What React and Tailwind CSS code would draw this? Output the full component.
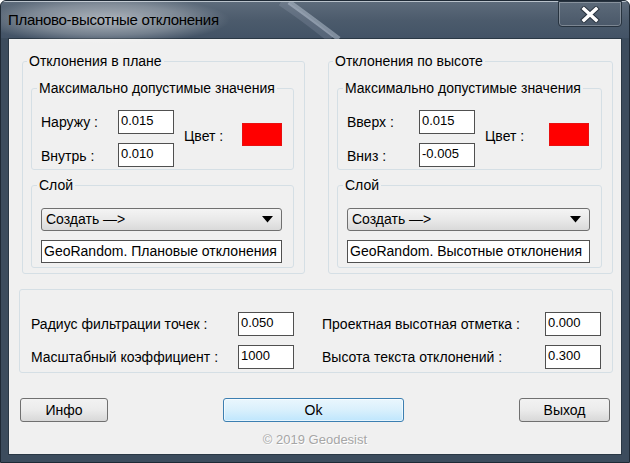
import React from "react";

function Field({ value, cls }) {
  return (
    <div className={"h-[24px] bg-white border border-[#505050] text-[13px] leading-[18px] pl-[2px] pt-[1px] text-black " + cls}>
      {value}
    </div>
  );
}

function Combo() {
  return (
    <div className="h-[23px] rounded-[3px] border border-[#707070] bg-gradient-to-b from-[#f4f4f4] via-[#e9e9e9] to-[#d9d9d9] flex items-center justify-between pl-[4px] pr-[8px] text-[14px]">
      <span>Создать —&gt;</span>
      <svg width="11" height="7" viewBox="0 0 11 7"><path d="M0 0 L11 0 L5.5 6.5 Z" fill="#000" /></svg>
    </div>
  );
}

function TextBox({ value }) {
  return (
    <div className="h-[23px] bg-white border border-[#505050] text-[14px] leading-[19px] pl-[2px] pt-[1px] whitespace-nowrap overflow-hidden">
      {value}
    </div>
  );
}

function Group({ title, labelA, labelB, valA, valB, labW, colorW, layerText, wcls }) {
  return (
    <fieldset className={"border border-[#d5dfe5] rounded-[3px] p-0 m-0 " + wcls}>
      <legend className="ml-[4px] px-[2px] text-[14px] leading-[16px]">{title}</legend>
      <div className="pt-[11px] pl-[8px] pr-[10px] pb-[5px]">
        <fieldset className="border border-[#d5dfe5] rounded-[3px] p-0 m-0">
          <legend className="ml-[5px] px-[2px] text-[14px] leading-[16px]">Максимально допустимые значения</legend>
          <div className="pt-[14px] pl-[9px] pb-[2px] flex">
            <div className="flex flex-col gap-[8px]">
              <div className="flex items-center">
                <span className={"text-[14px] " + labW}>{labelA}</span>
                <Field value={valA} cls="w-[56px]" />
              </div>
              <div className="flex items-center">
                <span className={"text-[14px] pt-[4px] " + labW}>{labelB}</span>
                <Field value={valB} cls="w-[56px]" />
              </div>
            </div>
            <span className={"ml-[10px] mt-[18px] text-[14px] leading-[16px] " + colorW}>Цвет :</span>
            <div className="mt-[13px] w-[40px] h-[23px] bg-[#ff0000] border border-[#e81010]" />
          </div>
        </fieldset>
        <fieldset className="mt-[7px] border border-[#d5dfe5] rounded-[3px] p-0 m-0">
          <legend className="ml-[5px] px-[2px] text-[14px] leading-[16px]">Слой</legend>
          <div className="pt-[15px] pl-[9px] pr-[11px] pb-[4px] flex flex-col gap-[9px]">
            <Combo />
            <TextBox value={layerText} />
          </div>
        </fieldset>
      </div>
    </fieldset>
  );
}

function Btn({ children, cls }) {
  return (
    <div className={"h-[24px] rounded-[3px] border border-[#707070] bg-gradient-to-b from-[#f2f2f2] via-[#ebebeb] to-[#d8d8d8] flex items-center justify-center text-[14px] " + cls}>
      {children}
    </div>
  );
}

export default function App() {
  return (
    <div className="relative w-[630px] h-[463px] overflow-hidden bg-[#3c4c5d] font-['Liberation_Sans',Arial,sans-serif] text-black rounded-t-[6px] border border-[#1e2935]">
      {/* title bar */}
      <div className="relative h-[37px] bg-gradient-to-b from-[#5d6b7b] via-[#4c5b6c] to-[#435366] border-t border-[#b9c2cb] flex justify-between">
        <div className="absolute left-[-20px] top-[-6px] w-[250px] h-[48px] rounded-[50%] bg-[radial-gradient(ellipse_at_center,rgba(255,255,255,0.55),rgba(255,255,255,0.25)_45%,rgba(255,255,255,0)_70%)]" />
        <svg className="absolute left-[250px] top-0" width="110" height="37" viewBox="0 0 110 37">
          <path d="M38 0 C 55 12, 72 25, 88 37" stroke="rgba(200,210,225,0.45)" strokeWidth="5" fill="none" />
          <path d="M30 0 C 48 12, 65 25, 80 37" stroke="rgba(200,210,225,0.15)" strokeWidth="8" fill="none" />
        </svg>
        <span className="relative pl-[7px] pt-[9px] text-[15px] leading-[18px] tracking-[-0.3px] text-black">Планово-высотные отклонения</span>
        <div className="relative mr-[7px] mt-[-1px] w-[64px] h-[26px] rounded-b-[4px] border border-[#27333f] bg-gradient-to-b from-[#5c6a79] to-[#4a5869] shadow-[inset_0_0_0_1px_rgba(255,255,255,0.28)] flex items-center justify-center">
          <svg width="20" height="17" viewBox="0 0 20 17">
            <path d="M4 3 L16 14 M16 3 L4 14" stroke="#2a3440" strokeWidth="5.5" strokeLinecap="square" />
            <path d="M4 3 L16 14 M16 3 L4 14" stroke="#ffffff" strokeWidth="3.5" strokeLinecap="square" />
          </svg>
        </div>
      </div>
      {/* client */}
      <div className="ml-[7px] w-[614px] h-[417px] bg-[#f0f0f0] border border-[#2a3845]">
        <div className="flex pt-[14px] pl-[13px] gap-[23px]">
          <Group
            wcls="w-[283px]"
            title="Отклонения в плане"
            labelA="Наружу :"
            labelB="Внутрь :"
            valA="0.015"
            valB="0.010"
            labW="w-[77px]"
            colorW="w-[58px]"
            layerText="GeoRandom. Плановые отклонения"
          />
          <Group
            wcls="w-[285px]"
            title="Отклонения по высоте"
            labelA="Вверх :"
            labelB="Вниз :"
            valA="0.015"
            valB="-0.005"
            labW="w-[72px]"
            colorW="w-[64px]"
            layerText="GeoRandom. Высотные отклонения"
          />
        </div>
        <div className="mt-[15px] ml-[10px] w-[594px] border border-[#d5dfe5] rounded-[3px] pt-[22px] pl-[11px] pb-[3px] flex flex-col gap-[9px]">
          <div className="flex items-center">
            <span className="w-[207px] text-[14px]">Радиус фильтрации точек :</span>
            <Field value="0.050" cls="w-[56px] h-[23px]" />
            <span className="ml-[28px] w-[223px] text-[14px]">Проектная высотная отметка :</span>
            <Field value="0.000" cls="w-[56px] h-[23px]" />
          </div>
          <div className="flex items-center">
            <span className="w-[207px] text-[14px]">Масштабный коэффициент :</span>
            <Field value="1000" cls="w-[56px] h-[23px]" />
            <span className="ml-[28px] w-[223px] text-[14px]">Высота текста отклонений :</span>
            <Field value="0.300" cls="w-[56px] h-[23px]" />
          </div>
        </div>
        <div className="mt-[25px] flex items-center">
          <Btn cls="ml-[11px] w-[88px]">Инфо</Btn>
          <div className="ml-[115px] w-[181px] h-[24px] rounded-[3px] border border-[#3c7fb1] bg-gradient-to-b from-[#eaf6fd] via-[#d9f0fc] to-[#bee6fd] shadow-[inset_0_0_0_1px_rgba(255,255,255,0.6)] flex items-center justify-center text-[14px] font-normal">
            Ok
          </div>
          <Btn cls="ml-auto mr-[11px] w-[91px]">Выход</Btn>
        </div>
        <div className="mt-[10px] text-center text-[13px] leading-[16px] text-[#a6a6a6] [text-shadow:1px_1px_0_#ffffff]">© 2019 Geodesist</div>
      </div>
    </div>
  );
}
